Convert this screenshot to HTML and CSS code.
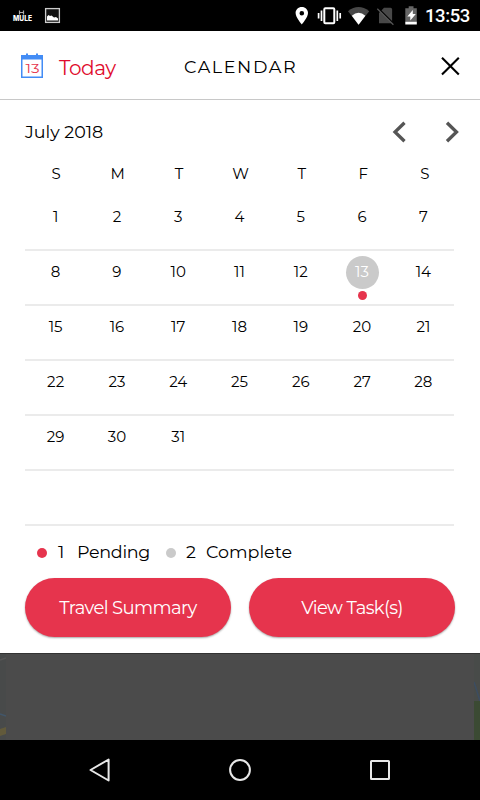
FILE: index.html
```
<!DOCTYPE html>
<html lang="en">
<head>
<meta charset="utf-8">
<title>Calendar</title>
<link rel="stylesheet" href="styles.css">
</head>
<body>
<div class="screen">
  <div class="status-bar">
    <svg class="status-left" width="64" height="31" viewBox="0 0 64 31">
      <path d="M19.500 10.500v4M23.500 10.500v4M19 12.500h5" stroke="#aaa" stroke-width="1.200" fill="none"/>
      <text class="mule" x="13" y="21" textLength="19" lengthAdjust="spacingAndGlyphs">MULE</text>
      <rect x="45.600" y="8.600" width="13.800" height="13.800" fill="#111" stroke="#ccc" stroke-width="1.300"/>
      <path d="M47 20.500v-4l1.500-1.500 1.500 1 1.500-.5 2.500 2 2-.5 2 1.500v2z" fill="#fff"/>
    </svg>
    <svg class="status-right" width="128" height="31" viewBox="292 0 128 31">
      <path d="M301.800 7c-3.600 0-6.200 2.700-6.200 6.100 0 4.400 6.200 11.400 6.200 11.400s6.200-7 6.200-11.400c0-3.400-2.600-6.100-6.200-6.100zm0 3.900a2.300 2.300 0 1 1 0 4.600 2.300 2.300 0 0 1 0-4.600z" fill="#fff" fill-rule="evenodd"/>
      <rect x="324.300" y="8.200" width="10" height="15" rx="1" fill="none" stroke="#fff" stroke-width="2"/>
      <path d="M321.500 10.500v10.500M337.300 10.500v10.500M318.600 13v5.500M340.200 13v5.500" stroke="#fff" stroke-width="1.700"/>
      <path d="M348 11.200Q358.500 2.800 369.200 11.200L358.600 24.700z" fill="#484848"/>
      <path d="M351.800 15.800Q358.600 9.900 365.400 15.800L358.600 24.700z" fill="#fff"/>
      <path d="M379 13l5-5.200h6.500q1.600 0 1.600 1.600v12.900q0 1-1 1h-12.100z" fill="#484848"/>
      <path d="M378.300 8.200l15.700 15.800" stroke="#000" stroke-width="1.500"/>
      <path d="M377.300 8.700l16.100 16" stroke="#555" stroke-width="1.200"/>
      <path d="M408.700 6.300h4.800v2h3.300v14h-11.500v-14h3.400z" fill="#666"/>
      <path d="M405.300 21.800h11.500v2.700h-11.500z" fill="#fff"/>
      <path d="M412.800 10l-5.500 6.500h3v4l5.500-6.500h-3z" fill="#fff"/>
    </svg>
    <span class="clock">13:53</span>
  </div>

  <div class="calendar">
    <div class="header">
      <div class="today">
        <svg width="24" height="26" viewBox="0 0 24 26">
          <path d="M1 2h5V.500h2V2h8V.500h2V2h5v23H1z" fill="#438cf5"/>
          <path d="M2.500 6.500h19v17h-19z" fill="#fff"/>
          <text class="today-num" x="5.500" y="19.500" textLength="14" lengthAdjust="spacingAndGlyphs">13</text>
        </svg>
        <span class="today-text">Today</span>
      </div>
      <div class="title">CALENDAR</div>
      <svg class="close" width="20" height="20" viewBox="0 0 20 20">
        <path d="M2 1.800l16.800 16.800M18.800 1.800L2 18.600" stroke="#000" stroke-width="2.100"/>
      </svg>
    </div>

    <div class="month">
      <span class="month-name">July 2018</span>
      <svg class="arrows" width="70" height="24" viewBox="0 0 70 24">
        <path d="M14.500 2.700L5 12l9.500 9.300M57 2.700L66.500 12 57 21.300" fill="none" stroke="#555" stroke-width="3.300"/>
      </svg>
    </div>

    <div class="weekdays">
      <span>S</span><span>M</span><span>T</span><span>W</span><span>T</span><span>F</span><span>S</span>
    </div>

    <div class="week"><span>1</span><span>2</span><span>3</span><span>4</span><span>5</span><span>6</span><span>7</span></div>
    <div class="week"><span>8</span><span>9</span><span>10</span><span>11</span><span>12</span><span class="selected">13</span><span>14</span></div>
    <div class="week"><span>15</span><span>16</span><span>17</span><span>18</span><span>19</span><span>20</span><span>21</span></div>
    <div class="week"><span>22</span><span>23</span><span>24</span><span>25</span><span>26</span><span>27</span><span>28</span></div>
    <div class="week"><span>29</span><span>30</span><span>31</span></div>
    <div class="week"></div>

    <div class="legend">
      <i class="dot pending"></i>
      <span class="count">1</span>
      <span class="label-pending">Pending</span>
      <i class="dot complete"></i>
      <span class="count">2</span>
      <span class="label-complete">Complete</span>
    </div>

    <div class="buttons">
      <button class="btn">Travel Summary</button>
      <button class="btn">View Task(s)</button>
    </div>
  </div>

  <div class="map">
    <svg width="6" height="87" viewBox="0 0 6 87">
      <path d="M0 0h6v87H0z" fill="#484a4a"/>
      <path d="M0 6l6-2" stroke="#555" stroke-width="1.500"/>
      <path d="M0 60l6 2" stroke="#42566a" stroke-width="1.500"/>
      <path d="M0 75l6-2v7l-6 2z" fill="#625a3b"/>
    </svg>
    <svg width="6" height="87" viewBox="0 0 6 87">
      <path d="M0 0h6v48H0z" fill="#484b49"/>
      <path d="M0 28l6 19" stroke="#3c4d62" stroke-width="1.500"/>
      <path d="M0 47h6v40H0z" fill="#3b4a33"/>
    </svg>
  </div>

  <div class="nav-bar">
    <svg width="24" height="26" viewBox="0 0 24 26"><path d="M20.600 2.500v21L2.500 13z" fill="none" stroke="#e8e8e8" stroke-width="2" stroke-linejoin="round"/></svg>
    <svg width="24" height="26" viewBox="0 0 24 26"><circle cx="12" cy="13" r="9.900" fill="none" stroke="#e8e8e8" stroke-width="2"/></svg>
    <svg width="24" height="26" viewBox="0 0 24 26"><rect x="3" y="4" width="18" height="18" rx=".5" fill="none" stroke="#e8e8e8" stroke-width="2"/></svg>
  </div>
</div>
</body>
</html>
```
FILE: styles.css
```
* {
  box-sizing: border-box;
}
body {
  margin: 0;
  background: #000;
  font-family: Montserrat, Inter, "Liberation Sans", sans-serif;
  color: #000;
}
svg {
  display: block;
  flex: none;
}
.screen {
  width: 480px;
  height: 800px;
  display: flex;
  flex-direction: column;
  overflow: hidden;
}

/* status bar */
.status-bar {
  height: 31px;
  display: flex;
  align-items: center;
  background: #000;
}
.status-right {
  margin-left: 228px;
}
.mule {
  font: 800 7px Inter, sans-serif;
  fill: #fff;
}
.clock {
  margin-left: 5px;
  color: #fff;
  font: 500 18.5px/31px Roboto, sans-serif;
  letter-spacing: -0.4px;
  padding-top: 2px;
}

/* calendar */
.calendar {
  height: 622px;
  background: #fff;
}
.header {
  height: 69px;
  padding: 1px 20px 0;
  display: flex;
  align-items: center;
  border-bottom: 1px solid #c8c8c8;
}
.today {
  width: 164px;
  display: flex;
  align-items: center;
  gap: 15px;
  color: #e00b2d;
}
.today svg {
  margin-top: 1px;
}
.today-num {
  font-size: 13.5px;
  fill: #e5344c;
}
.today-text {
  font-size: 20px;
  letter-spacing: -0.4px;
  padding-top: 4px;
}
.title {
  font-size: 17.5px;
  letter-spacing: 1.6px;
  padding-top: 1px;
}
.close {
  margin-left: auto;
}
.month {
  height: 64px;
  padding: 0 20px 0 25px;
  display: flex;
  justify-content: space-between;
  align-items: center;
}
.month-name {
  font-size: 17.5px;
  padding-bottom: 1px;
}
.weekdays {
  width: 430px;
  height: 32px;
  margin-left: 25.5px;
  display: grid;
  grid-template-columns: repeat(7, 1fr);
  font-size: 15px;
  line-height: 20px;
  text-align: center;
}
.week {
  width: 429px;
  height: 55px;
  margin-left: 25px;
  padding-top: 5px;
  display: grid;
  grid-template-columns: repeat(7, 1fr);
  justify-items: center;
  align-items: start;
  border-bottom: 2px solid #ebebeb;
  font-size: 15px;
}
.week span {
  width: 33px;
  height: 33px;
  line-height: 32px;
  text-align: center;
}
.week .selected {
  position: relative;
  border-radius: 50%;
  background: #cacaca;
  color: #fff;
}
.selected::after {
  content: "";
  position: absolute;
  left: 12px;
  top: 34.5px;
  width: 9px;
  height: 9px;
  border-radius: 50%;
  background: #e6344d;
}

/* legend */
.legend {
  height: 52px;
  padding-left: 37px;
  padding-bottom: 1px;
  display: flex;
  align-items: center;
  font-size: 17.5px;
}
.dot {
  width: 10px;
  height: 10px;
  margin-top: 3px;
  border-radius: 50%;
}
.pending {
  background: #e6344d;
}
.complete {
  margin-left: 15px;
  background: #cacaca;
}
.count {
  width: 19px;
  margin-left: 11px;
}
.complete + .count {
  width: 20px;
  margin-left: 10px;
}
.label-pending {
  width: 74px;
  letter-spacing: -0.3px;
}
.buttons {
  padding: 0 25px;
  display: flex;
  gap: 18px;
}
.btn {
  width: 206px;
  height: 59px;
  padding: 0;
  border: none;
  border-radius: 30px;
  background: #e6344d;
  color: #fff;
  font-family: inherit;
  font-size: 18px;
  letter-spacing: -0.6px;
  box-shadow: 0 1px 2px rgba(0, 0, 0, 0.35);
}
.tasks {
  letter-spacing: -0.4px;
}

/* dimmed map behind the dialog */
.map {
  height: 87px;
  display: flex;
  justify-content: space-between;
  background: #4b4b4b;
  border-top: 1px solid #333;
}
.nav-bar {
  height: 60px;
  padding: 0 88px;
  display: flex;
  justify-content: space-between;
  align-items: center;
  background: #000;
}
```
